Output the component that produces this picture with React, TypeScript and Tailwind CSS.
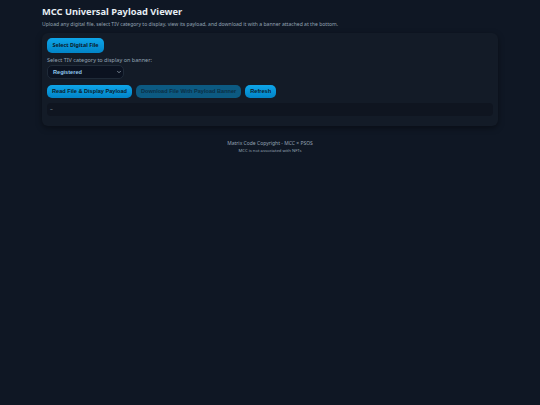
import { ChevronDown } from "lucide-react";

const noto = "font-['Noto_Sans',sans-serif]";
const arial = "font-['Liberation_Sans',sans-serif]";

export default function App() {
  return (
    <div className={`min-h-[405px] bg-[#0f1724] px-[42px] pt-[5px] ${noto}`}>
      <h1 className="text-[9.3px] leading-[13px] font-bold text-[#e6edf3]">MCC Universal Payload Viewer</h1>
      <p className="mt-[2px] text-[5.07px] leading-[8px] text-[#94a3b3]">
        Upload any digital file, select TIV category to display, view its payload, and download it with a banner attached at the bottom.
      </p>
      <div className="mt-[5px] rounded-[6px] bg-[#131b27] p-[5px] pb-[10px] shadow-[0_2px_6px_rgba(0,0,0,0.4)]">
        <button className="block h-[15px] rounded-[5px] bg-gradient-to-b from-[#0ea5e9] to-[#0284c7] px-[5.5px] text-[5.4px] font-bold text-[#0b1a2a]">
          Select Digital File
        </button>
        <div className="mt-[3px] text-[5.5px] leading-[8px] text-[#94a3b3]">Select TIV category to display on banner:</div>
        <div className="mt-[1px] flex h-[14px] w-[77px] items-center justify-between rounded-[5px] border border-[#1f2a38] bg-[#0b1220] pl-[5px] pr-[1.5px]">
          <span className={`text-[5.6px] font-bold text-[#8fc7ec] ${arial}`}>Registered</span>
          <ChevronDown size={6} strokeWidth={3} className="text-[#9aa7b4]" />
        </div>
        <div className={`mt-[6px] flex gap-[4px] text-[5.6px] font-bold ${arial}`}>
          <button className="h-[13px] rounded-[5px] bg-gradient-to-b from-[#0ea5e9] to-[#0284c7] px-[5px] text-[#0b1a2a]">
            Read File &amp; Display Payload
          </button>
          <button className="h-[13px] rounded-[5px] bg-[#0c5a82] px-[5px] text-[#0b2f45]">
            Download File With Payload Banner
          </button>
          <button className="h-[13px] rounded-[5px] bg-gradient-to-b from-[#0ea5e9] to-[#0284c7] px-[5px] text-[#0b1a2a]">
            Refresh
          </button>
        </div>
        <div className="mt-[5px] flex h-[13px] items-center rounded-[4px] bg-[#0f1520] px-[3px] text-[5.6px] text-[#9aa7b4]">–</div>
      </div>
      <div className="mt-[13px] text-center">
        <div className="text-[5px] leading-[8px] text-[#94a3b3]">Matrix Code Copyright - MCC × PSOS</div>
        <div className="text-[4.2px] leading-[7px] text-[#94a3b3]">MCC is not associated with NFTs</div>
      </div>
    </div>
  );
}
